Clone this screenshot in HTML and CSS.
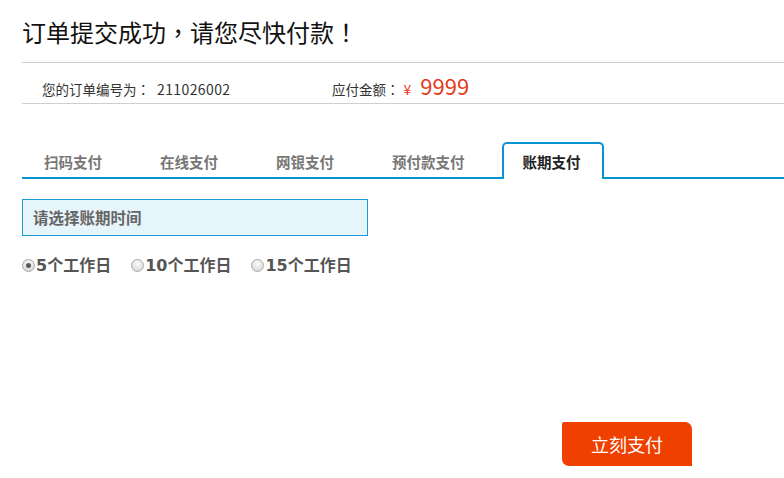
FILE: index.html
```html
<!DOCTYPE html>
<html lang="zh-CN">
<head>
<meta charset="utf-8">
<title>订单提交成功</title>
<link rel="stylesheet" href="styles.css">
</head>
<body>
<div class="page">
  <h1 class="title">订单提交成功<span class="punct" lang="zh-TW">，</span>请您尽快付款<span class="punct" lang="zh-TW">！</span></h1>
  <div class="order-row">
    <div class="order-no">您的订单编号为<span class="punct" lang="zh-TW">：</span><span class="num">211026002</span></div>
    <div class="order-amount">应付金额<span class="punct" lang="zh-TW">：</span><span class="yen">¥</span><span class="price">9999</span></div>
  </div>
  <div class="tabs">
    <div class="tab">扫码支付</div>
    <div class="tab">在线支付</div>
    <div class="tab">网银支付</div>
    <div class="tab">预付款支付</div>
    <div class="tab active">账期支付</div>
  </div>
  <div class="period-box">请选择账期时间</div>
  <div class="radios">
    <label class="radio checked"><span class="dot"></span>5个工作日</label>
    <label class="radio"><span class="dot"></span>10个工作日</label>
    <label class="radio"><span class="dot"></span>15个工作日</label>
  </div>
  <div class="actions">
    <button class="pay-btn">立刻支付</button>
  </div>
</div>
</body>
</html>
```
FILE: styles.css
```css
html, body {
  margin: 0;
  padding: 0;
  background: #fff;
}
body {
  font-family: "Noto Sans CJK SC", "Noto Sans", sans-serif;
  color: #333;
}
.page {
  padding-left: 22px;
  width: 762px;
}
.punct {
  font-family: "Noto Sans CJK TC", sans-serif;
}
.title {
  margin: 14px 0 0;
  font-size: 24px;
  font-weight: normal;
  line-height: 36px;
  color: #111;
  padding-bottom: 12px;
  border-bottom: 1px solid #cfcfcf;
}
.order-row {
  display: flex;
  align-items: baseline;
  height: 41px;
  padding-top: 5px;
  box-sizing: border-box;
  line-height: 35px;
  font-size: 13.5px;
  color: #333;
  border-bottom: 1px solid #cfcfcf;
}
.order-no {
  width: 310px;
  padding-left: 20px;
  box-sizing: border-box;
}
.num {
  font-size: 14px;
  margin-left: 7px;
  letter-spacing: 0.4px;
}
.yen {
  color: #e4391b;
  font-size: 14px;
  margin-left: 4px;
}
.price {
  color: #e4391b;
  font-size: 22px;
  margin-left: 9px;
}
.tabs {
  display: flex;
  align-items: flex-end;
  margin-top: 38px;
  padding-left: 1px;
  border-bottom: 2px solid #0a93d2;
  height: 35px;
}
.tab {
  padding: 5px 21px 0;
  margin-right: 16px;
  line-height: 30px;
  height: 30px;
  font-size: 14.5px;
  font-weight: bold;
  color: #777;
}
.tab.active {
  margin-bottom: -2px;
  padding: 3px 21px 2px 19px;
  border: 2px solid #0a93d2;
  border-bottom: none;
  border-radius: 5px 5px 0 0;
  background: #fff;
  color: #222;
}
.period-box {
  margin-top: 20px;
  width: 346px;
  box-sizing: border-box;
  border: 1px solid #1a9ad6;
  background: #e6f4fb;
  line-height: 35px;
  padding-left: 10px;
  font-size: 15.5px;
  font-weight: bold;
  color: #666;
}
.radios {
  display: flex;
  align-items: center;
  margin-top: 18px;
  line-height: 24px;
  height: 24px;
}
.radio {
  display: flex;
  align-items: center;
  font-family: "DejaVu Sans", "Noto Sans CJK SC", sans-serif;
  font-size: 16px;
  font-weight: bold;
  color: #555;
  margin-right: 20px;
}
.dot {
  width: 11px;
  height: 11px;
  border-radius: 50%;
  border: 1px solid #a9a9a9;
  background: radial-gradient(circle at 50% 35%, #fbfbfb 0, #e6e6e6 50%, #cfcfcf 100%);
  margin-right: 1px;
  margin-top: -2px;
  position: relative;
  box-sizing: content-box;
}
.radio.checked .dot::after {
  content: "";
  position: absolute;
  left: 3px;
  top: 3px;
  width: 5px;
  height: 5px;
  border-radius: 50%;
  background: #5a5a5a;
}
.actions {
  margin-top: 144px;
  padding-left: 540px;
}
.pay-btn {
  display: block;
  width: 130px;
  height: 44px;
  border: none;
  border-radius: 2px 7px 0 7px;
  background: #f04000;
  color: #fff;
  font-family: "Noto Sans CJK SC", sans-serif;
  font-size: 18px;
  line-height: 44px;
  padding: 0;
}
```
